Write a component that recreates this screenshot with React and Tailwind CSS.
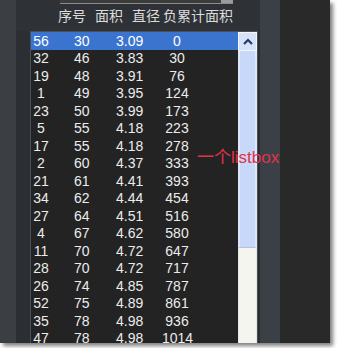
import React from "react";

const rows = [
  ["56", "30", "3.09", "0"],
  ["32", "46", "3.83", "30"],
  ["19", "48", "3.91", "76"],
  ["1", "49", "3.95", "124"],
  ["23", "50", "3.99", "173"],
  ["5", "55", "4.18", "223"],
  ["17", "55", "4.18", "278"],
  ["2", "60", "4.37", "333"],
  ["21", "61", "4.41", "393"],
  ["34", "62", "4.44", "454"],
  ["27", "64", "4.51", "516"],
  ["4", "67", "4.62", "580"],
  ["11", "70", "4.72", "647"],
  ["28", "70", "4.72", "717"],
  ["26", "74", "4.85", "787"],
  ["52", "75", "4.89", "861"],
  ["35", "78", "4.98", "936"],
  ["47", "78", "4.98", "1014"],
];

export default function App() {
  return (
    <div className="relative w-[337px] h-[348px] bg-white overflow-hidden">
      <div className="flex w-[330px] h-[343px] bg-[#292929] shadow-[3px_3px_4px_rgba(0,0,0,0.5)]">
        <div className="w-[16px] bg-[#3b3f44]" />
        <div className="w-[244px] flex flex-col bg-[#2e3236]">
          {/* top textbox edge */}
          <div className="ml-[44px] w-[173px] h-[4px] flex bg-[#3c3c3c] border-b border-[#8c8c8c]">
            <div className="flex-1" />
            <div className="w-[12px] bg-[#9a9a9a]" />
          </div>
          {/* header */}
          <div
            className="mt-[3px] ml-[42px] h-[16px] flex items-center text-[14px] leading-[16px] text-[#dcdcdc] whitespace-nowrap"
            style={{ fontFamily: '"Noto Sans CJK SC", "Liberation Sans", sans-serif' }}
          >
            <span>序号</span>
            <span className="ml-[9px]">面积</span>
            <span className="ml-[9px]">直径</span>
            <span className="ml-[3px]">负累计面积</span>
          </div>
          {/* listbox row */}
          <div className="mt-[8px] flex-1 flex min-h-0">
            <div className="w-[14px] bg-[#2b2f33]" />
            <div className="w-[228px] flex border-l border-t border-r border-[#4a4f56] bg-[#232323] overflow-hidden">
              <div
                className="flex-1 flex flex-col text-[14px] text-[#ececec]"
                style={{ fontFamily: '"Liberation Sans", Arial, sans-serif' }}
              >
                {rows.map((r, i) => (
                  <div
                    key={i}
                    className={
                      "h-[17.5px] shrink-0 flex items-center leading-[16px] " +
                      (i === 0 ? "bg-[#3b74cf] text-white" : "")
                    }
                  >
                    <span className="w-[20px] text-center">{r[0]}</span>
                    <span className="ml-[23px] w-[42px]">{r[1]}</span>
                    <span className="w-[46px]">{r[2]}</span>
                    <span className="w-[30px] text-center">{r[3]}</span>
                  </div>
                ))}
              </div>
              {/* scrollbar */}
              <div className="w-[19px] flex flex-col">
                <div className="h-[19px] shrink-0 flex items-center justify-center bg-[#d6e2f8] border border-[#f2f6fd]">
                  <svg width="10" height="7" viewBox="0 0 10 7">
                    <path d="M1 6 L5 2 L9 6" fill="none" stroke="#233a72" strokeWidth="2.2" />
                  </svg>
                </div>
                <div className="h-[197px] shrink-0 bg-[#c8d8f8] border-x-2 border-[#dfe8fb] border-b border-b-[#b0c4ea]" />
                <div className="flex-1 bg-[#f5f5ef] border-x border-[#e6e6e0]" />
              </div>
            </div>
            <div className="w-[2px] bg-[#2a2e33]" />
          </div>
        </div>
        <div className="w-[20px] bg-[#3b4047]" />
        <div className="flex-1 bg-[#292929]" />
      </div>
      {/* annotation */}
      <div
        className="absolute left-[197px] top-[148px] text-[17px] leading-[20px] text-[#e3324c] whitespace-nowrap"
        style={{ fontFamily: '"Liberation Sans", "Noto Sans CJK SC", sans-serif' }}
      >
        一个listbox
      </div>
    </div>
  );
}
